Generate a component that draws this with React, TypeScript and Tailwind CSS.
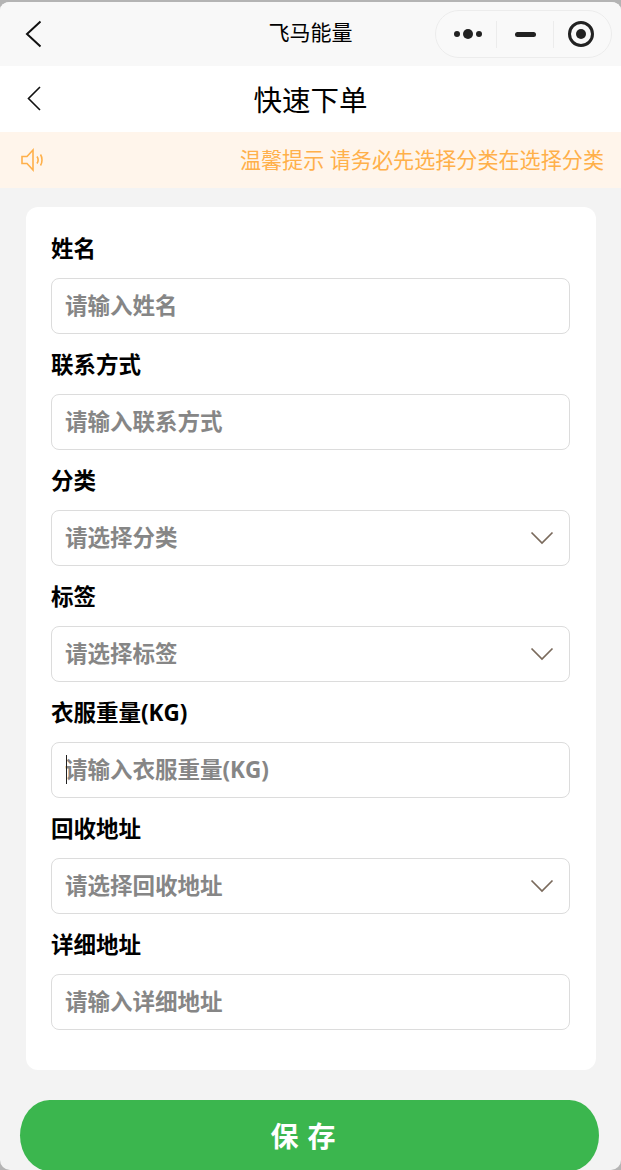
import React from "react";

const fields = [
  { label: "姓名", placeholder: "请输入姓名" },
  { label: "联系方式", placeholder: "请输入联系方式" },
  { label: "分类", placeholder: "请选择分类", select: true },
  { label: "标签", placeholder: "请选择标签", select: true },
  { label: "衣服重量(KG)", placeholder: "请输入衣服重量(KG)", caret: true },
  { label: "回收地址", placeholder: "请选择回收地址", select: true },
  { label: "详细地址", placeholder: "请输入详细地址" },
];

const font = "font-['Open_Sans','Noto_Sans_CJK_SC',sans-serif]";

const App = () => {
  return (
    <div className={`${font} relative h-[1170px] w-[621px] overflow-hidden bg-[#b4b4b4]`}>
      <div className="h-[1170px] overflow-hidden rounded-[10px] border-t-2 border-[#b4b4b4] bg-[#f3f3f3]">
        {/* window bar */}
        <div className="relative flex h-[64px] items-center justify-between bg-[#f8f8f8] pl-[25px] pr-[9px]">
          <svg width="18" height="28" viewBox="0 0 18 28" fill="none" stroke="#111" strokeWidth="2">
            <path d="M15.500 1.500 2 14 15.500 26.500" />
          </svg>
          <span className="absolute left-0 top-[20px] w-[621px] text-center text-[21px] leading-none text-black">飞马能量</span>
          <div className="flex h-[48px] w-[177px] items-center rounded-full border border-[#ececec] bg-[#f9f9f9]">
            <div className="flex w-[60px] items-center justify-center gap-[3px] pl-[3px]">
              <span className="size-[6px] rounded-full bg-[#222]" />
              <span className="size-[10px] rounded-full bg-[#222]" />
              <span className="size-[6px] rounded-full bg-[#222]" />
            </div>
            <div className="h-[27px] w-px bg-[#ececec]" />
            <div className="flex w-[56px] justify-center">
              <span className="h-[5px] w-[21px] rounded-full bg-[#222]" />
            </div>
            <div className="h-[27px] w-px bg-[#ececec]" />
            <div className="flex flex-1 justify-center pr-[3px]">
              <span className="flex size-[26px] items-center justify-center rounded-full border-[3px] border-[#222]">
                <span className="size-[10px] rounded-full bg-[#222]" />
              </span>
            </div>
          </div>
        </div>

        {/* nav */}
        <div className="relative flex h-[66px] items-center justify-center bg-white pt-[3px]">
          <svg className="absolute left-[23px] top-[18px]" width="24" height="28" viewBox="0 0 24 28" fill="none" stroke="#111" strokeWidth="1.6">
            <path d="M17 3 5.500 14.500 17 26" />
          </svg>
          <span className="text-[28.5px] leading-none text-black">快速下单</span>
        </div>

        {/* notice */}
        <div className="flex h-[56px] items-center justify-between bg-[#fff5eb] pl-[20px] pr-[17px]">
          <svg width="26" height="26" viewBox="0 0 26 26" fill="none" stroke="#ffb04a" strokeWidth="1.6">
            <path d="M2 9.500h5L13 3v20l-6-6.500H2z" />
            <path d="M17 9.500c1.300 2 1.300 5 0 7M20.500 7.500c2 3 2 8 0 11" />
          </svg>
          <span className="text-[21.1px] leading-none text-[#ffb04a]">温馨提示 请务必先选择分类在选择分类</span>
        </div>

        {/* form */}
        <div className="ml-[26px] mt-[19px] w-[570px] rounded-[12px] bg-white pb-[40px] pl-[25px] pr-[26px] pt-[11px]">
          {fields.map((item) => (
            <div key={item.label}>
              <div className="flex h-[60px] items-center pt-[2px] text-[22.500px] font-bold text-black">{item.label}</div>
              <div className="relative flex h-[56px] items-center justify-between rounded-[8px] border border-[#dcdcdc] pl-[13px] pr-[15px]">
                <span className="text-[22.500px] font-bold text-[#868686]">{item.placeholder}</span>
                {item.caret && <span className="absolute left-[14px] top-[12px] h-[29px] w-px bg-[#222]" />}
                {item.select && (
                  <svg width="24" height="14" viewBox="0 0 24 14" fill="none" stroke="#7a6a5c" strokeWidth="1.7">
                    <path d="M1.500 1.500 12 12 22.500 1.500" />
                  </svg>
                )}
              </div>
            </div>
          ))}
        </div>

        <button className="ml-[20px] mt-[30px] block h-[71px] w-[579px] rounded-[30px/36px] bg-[#3bb64e] pr-[4px] text-[28px] font-bold tracking-[9px] text-white">
          保存
        </button>
      </div>
    </div>
  );
};

export default App;
